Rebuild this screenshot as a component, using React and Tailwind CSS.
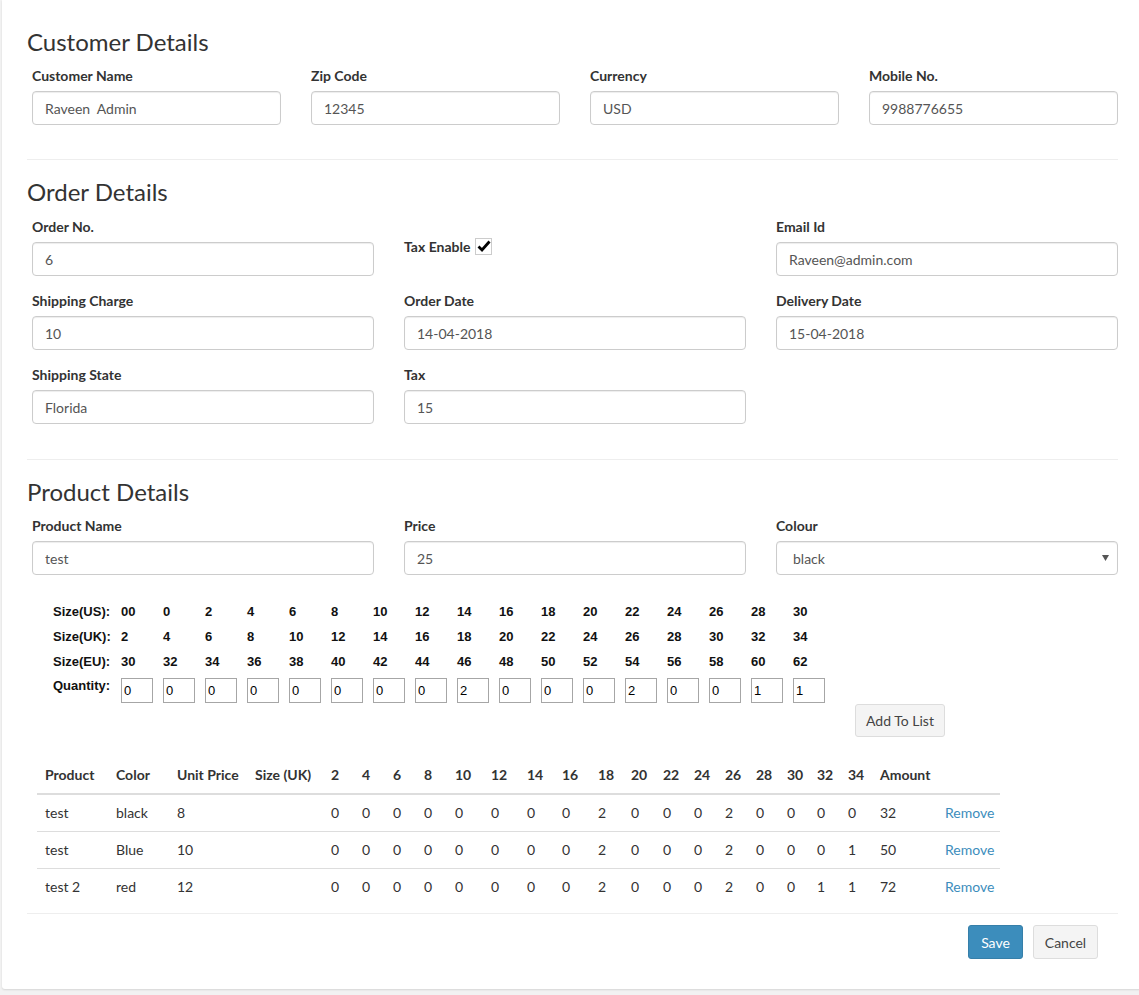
import React from "react";

const inputCls =
  "block w-full h-[34px] rounded-[4px] border border-[#ccc] bg-white px-[12px] text-[14px] text-[#555] shadow-[inset_0_1px_1px_rgba(0,0,0,0.075)] outline-none font-[family-name:Lato,sans-serif]";

function Label({ children }) {
  return (
    <div className="h-[20px] leading-[20px] mb-[5px] text-[14px] font-bold text-[#333]">
      {children}
    </div>
  );
}

function Field({ label, value }) {
  return (
    <div className="mb-[15px]">
      <Label>{label}</Label>
      <input className={inputCls} defaultValue={value} readOnly />
    </div>
  );
}

function Heading({ children, first }) {
  return (
    <h3
      className={
        (first ? "" : "mt-[19px] ") +
        "h-[26px] leading-[26px] mb-[12px] text-[24px] font-normal text-[#333]"
      }
    >
      {children}
    </h3>
  );
}

const us = ["00", "0", "2", "4", "6", "8", "10", "12", "14", "16", "18", "20", "22", "24", "26", "28", "30"];
const uk = ["2", "4", "6", "8", "10", "12", "14", "16", "18", "20", "22", "24", "26", "28", "30", "32", "34"];
const eu = ["30", "32", "34", "36", "38", "40", "42", "44", "46", "48", "50", "52", "54", "56", "58", "60", "62"];
const qty = ["0", "0", "0", "0", "0", "0", "0", "0", "2", "0", "0", "0", "2", "0", "0", "1", "1"];

function SizeRow({ label, values }) {
  return (
    <div className="flex h-[25px] items-center">
      <div className="w-[68px]">{label}</div>
      {values.map((v, i) => (
        <div key={i} className="w-[42px]">
          {v}
        </div>
      ))}
    </div>
  );
}

const colW = [71, 61, 78, 76, 31, 31, 31, 31, 36, 36, 35, 36, 33, 32, 31, 31, 31, 31, 30, 31, 32, 65, 63];
const headers = ["Product", "Color", "Unit Price", "Size (UK)", ...uk, "Amount", ""];
const rows = [
  ["test", "black", "8", "", "0", "0", "0", "0", "0", "0", "0", "0", "2", "0", "0", "0", "2", "0", "0", "0", "0", "32"],
  ["test", "Blue", "10", "", "0", "0", "0", "0", "0", "0", "0", "0", "2", "0", "0", "0", "2", "0", "0", "0", "1", "50"],
  ["test 2", "red", "12", "", "0", "0", "0", "0", "0", "0", "0", "0", "2", "0", "0", "0", "2", "0", "0", "1", "1", "72"],
];

export default function App() {
  return (
    <div className="min-h-[995px] w-[1139px] overflow-hidden bg-[#f2f2f2] font-[family-name:Lato,sans-serif] text-[14px] text-[#333]">
      <div className="ml-[2px] w-[1140px] rounded-b-[3px] bg-white pl-[25px] pr-[24px] pt-[29px] pb-[30px] shadow-[0_1px_2px_rgba(0,0,0,0.12)]">
        {/* Customer Details */}
        <Heading first>Customer Details</Heading>
        <div className="-mt-[1px] grid grid-cols-4 gap-x-[30px] pl-[5px]">
          <Field label="Customer Name" value="Raveen  Admin" />
          <Field label="Zip Code" value="12345" />
          <Field label="Currency" value="USD" />
          <Field label="Mobile No." value="9988776655" />
        </div>
        <div className="mt-[19px] border-t border-[#eee]" />

        {/* Order Details */}
        <Heading>Order Details</Heading>
        <div className="grid grid-cols-3 gap-x-[30px] pl-[5px]">
          <Field label="Order No." value="6" />
          <div className="mt-[19px] flex h-[20px] items-center gap-[5px]">
            <span className="font-bold">Tax Enable</span>
            <span className="flex h-[17px] w-[17px] items-center justify-center border border-[#ccc] bg-white">
              <svg width="14" height="13" viewBox="0 0 14 13">
                <path d="M1.5 6.5 L5 10 L12.5 1.5" fill="none" stroke="#000" strokeWidth="2.8" strokeLinejoin="miter" />
              </svg>
            </span>
          </div>
          <Field label="Email Id" value="Raveen@admin.com" />
          <Field label="Shipping Charge" value="10" />
          <Field label="Order Date" value="14-04-2018" />
          <Field label="Delivery Date" value="15-04-2018" />
          <Field label="Shipping State" value="Florida" />
          <Field label="Tax" value="15" />
          <div />
        </div>
        <div className="mt-[20px] border-t border-[#eee]" />

        {/* Product Details */}
        <Heading>Product Details</Heading>
        <div className="-mt-[1px] grid grid-cols-3 gap-x-[30px] pl-[5px]">
          <Field label="Product Name" value="test" />
          <Field label="Price" value="25" />
          <div className="mb-[15px]">
            <Label>Colour</Label>
            <div className="flex h-[34px] items-center justify-between rounded-[4px] border border-[#ccc] bg-white pl-[16px] pr-[8px] text-[14px] text-[#555] shadow-[inset_0_1px_1px_rgba(0,0,0,0.075)]">
              <span>black</span>
              <svg width="7" height="6" viewBox="0 0 7 6">
                <path d="M0 0 H7 L3.5 6 Z" fill="#555" />
              </svg>
            </div>
          </div>
        </div>

        {/* Size grid */}
        <div className="mt-[9px] pl-[26px] font-[family-name:'Liberation_Sans',sans-serif] text-[13px] font-bold text-[#111]">
          <SizeRow label="Size(US):" values={us} />
          <SizeRow label="Size(UK):" values={uk} />
          <SizeRow label="Size(EU):" values={eu} />
          <div className="flex h-[29px] items-start">
            <div className="w-[68px] pt-[2px]">Quantity:</div>
            {qty.map((v, i) => (
              <div key={i} className="w-[42px] pt-[4px]">
                <input
                  className="block h-[25px] w-[32px] border border-[#a6a6a6] bg-white px-[2px] text-[13px] font-normal text-[#000] outline-none font-[family-name:'Liberation_Sans',sans-serif]"
                  defaultValue={v}
                  readOnly
                />
              </div>
            ))}
          </div>
        </div>
        <div className="mt-[1px] pl-[828px]">
          <button className="h-[33px] w-[90px] rounded-[3px] border border-[#ddd] bg-[#f4f4f4] text-[14px] text-[#444]">
            Add To List
          </button>
        </div>

        {/* Table */}
        <table className="ml-[10px] mt-[20px] w-[963px] table-fixed border-collapse">
          <colgroup>
            {colW.map((w, i) => (
              <col key={i} style={{ width: w }} />
            ))}
          </colgroup>
          <thead>
            <tr>
              {headers.map((h, i) => (
                <th
                  key={i}
                  className="whitespace-nowrap border-b-2 border-[#ddd] p-[8px] text-left text-[14px] font-bold leading-[20px] text-[#333]"
                >
                  {h}
                </th>
              ))}
            </tr>
          </thead>
          <tbody>
            {rows.map((r, ri) => (
              <tr key={ri}>
                {r.map((c, ci) => (
                  <td
                    key={ci}
                    className={
                      (ri > 0 ? "border-t border-[#ddd] " : "") +
                      "whitespace-nowrap p-[8px] text-[14px] leading-[20px] text-[#333]"
                    }
                  >
                    {c}
                  </td>
                ))}
                <td
                  className={
                    (ri > 0 ? "border-t border-[#ddd] " : "") +
                    "p-[8px] text-[14px] leading-[20px] text-[#3c8dbc]"
                  }
                >
                  Remove
                </td>
              </tr>
            ))}
          </tbody>
        </table>

        <div className="mt-[8px] border-t border-[#eee]" />
        <div className="mt-[11px] flex justify-end gap-[10px] pr-[20px]">
          <button className="h-[34px] w-[55px] rounded-[3px] border border-[#367fa9] bg-[#3c8dbc] text-[14px] text-white">
            Save
          </button>
          <button className="h-[34px] w-[65px] rounded-[3px] border border-[#ddd] bg-[#f4f4f4] text-[14px] text-[#444]">
            Cancel
          </button>
        </div>
      </div>
    </div>
  );
}
